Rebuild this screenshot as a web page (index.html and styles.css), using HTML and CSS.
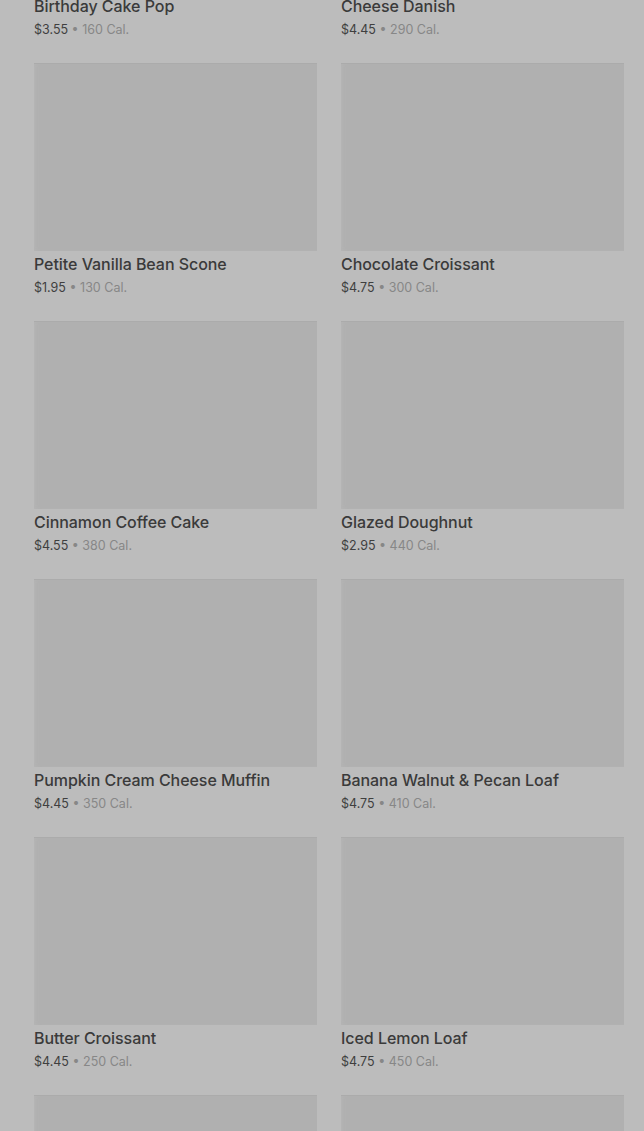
FILE: index.html
```html
<!DOCTYPE html>
<html lang="en">
<head>
<meta charset="utf-8">
<title>Bakery</title>
<link rel="stylesheet" href="styles.css">
</head>
<body>
<main class="grid">
  <div class="card"><div class="thumb"></div><div class="name">Birthday Cake Pop</div><div class="meta"><span class="price">$3.55</span> • 160 Cal.</div></div>
  <div class="card"><div class="thumb"></div><div class="name">Cheese Danish</div><div class="meta"><span class="price">$4.45</span> • 290 Cal.</div></div>
  <div class="card"><div class="thumb"></div><div class="name">Petite Vanilla Bean Scone</div><div class="meta"><span class="price">$1.95</span> • 130 Cal.</div></div>
  <div class="card"><div class="thumb"></div><div class="name">Chocolate Croissant</div><div class="meta"><span class="price">$4.75</span> • 300 Cal.</div></div>
  <div class="card"><div class="thumb"></div><div class="name">Cinnamon Coffee Cake</div><div class="meta"><span class="price">$4.55</span> • 380 Cal.</div></div>
  <div class="card"><div class="thumb"></div><div class="name">Glazed Doughnut</div><div class="meta"><span class="price">$2.95</span> • 440 Cal.</div></div>
  <div class="card"><div class="thumb"></div><div class="name">Pumpkin Cream Cheese Muffin</div><div class="meta"><span class="price">$4.45</span> • 350 Cal.</div></div>
  <div class="card"><div class="thumb"></div><div class="name">Banana Walnut &amp; Pecan Loaf</div><div class="meta"><span class="price">$4.75</span> • 410 Cal.</div></div>
  <div class="card"><div class="thumb"></div><div class="name">Butter Croissant</div><div class="meta"><span class="price">$4.45</span> • 250 Cal.</div></div>
  <div class="card"><div class="thumb"></div><div class="name">Iced Lemon Loaf</div><div class="meta"><span class="price">$4.75</span> • 450 Cal.</div></div>
  <div class="card"><div class="thumb"></div></div>
  <div class="card"><div class="thumb"></div></div>
</main>
</body>
</html>
```

FILE: styles.css
```css
html, body {
  margin: 0;
  padding: 0;
  background: #bcbcbc;
  height: 100%;
  overflow: hidden;
}
body {
  font-family: Inter, "Noto Sans", sans-serif;
  color: #3b3b3b;
}
.grid {
  display: grid;
  grid-template-columns: 283px 283px;
  column-gap: 24px;
  row-gap: 23px;
  padding: 0 20px 0 34px;
  margin-top: -195px;
}
.card {
  display: flex;
  flex-direction: column;
}
.thumb {
  height: 188px;
  background: #b0b0b0;
  box-shadow: inset 0 1px 0 #ababab, inset 4px 0 6px -4px #b8b8b8;
}
.name {
  margin-top: 1px;
  font-size: 16px;
  font-weight: 500;
  line-height: 24px;
  color: #3a3a3a;
  letter-spacing: -0.05px;
}
.meta {
  margin-top: 2px;
  font-size: 12.5px;
  line-height: 20px;
  color: #878787;
}
.price {
  color: #3f3f3f;
}
```
